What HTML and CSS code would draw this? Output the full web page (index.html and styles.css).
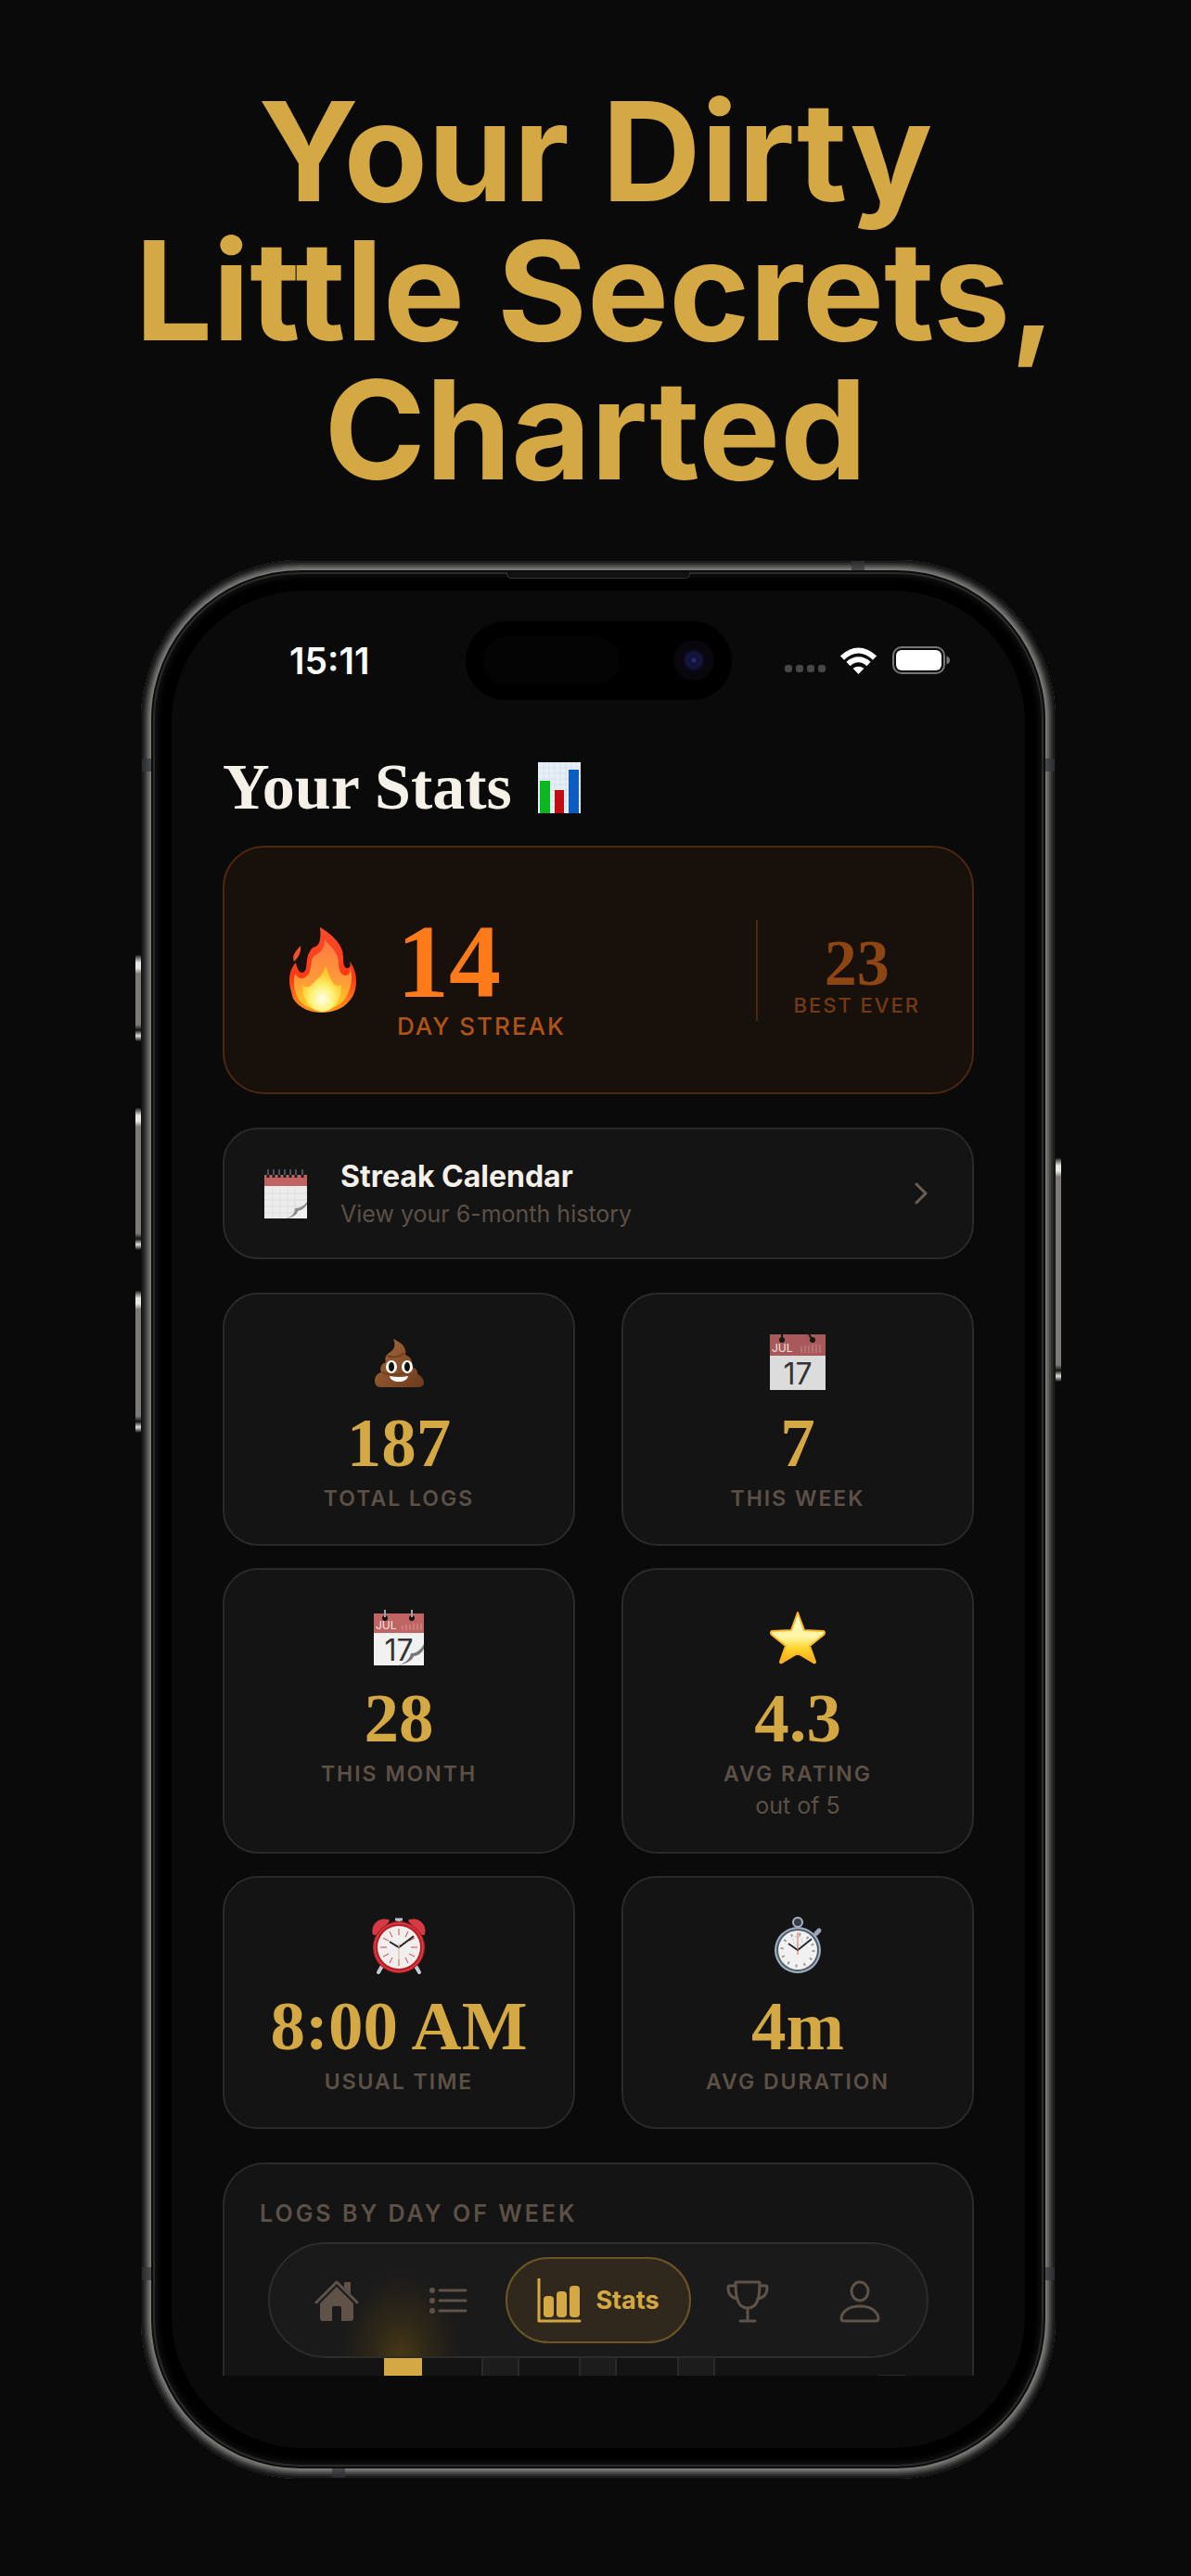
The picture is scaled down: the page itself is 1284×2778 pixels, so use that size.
FILE: index.html
```html
<!DOCTYPE html>
<html lang="en">
<head>
    <meta charset="UTF-8">
    <meta name="viewport" content="width=device-width, initial-scale=1.0">
    <title>Your Stats</title>
    <link rel="stylesheet" href="styles.css">
</head>
<body>
    <h1 class="headline">Your Dirty<br>Little Secrets,<br>Charted</h1>

    <div class="stage">
        <div class="phone">
            <span class="side-button action"></span>
            <span class="side-button volume-up"></span>
            <span class="side-button volume-down"></span>
            <span class="side-button power"></span>
            <span class="antenna antenna-left"></span>
            <span class="antenna antenna-right"></span>
            <span class="antenna antenna-left low"></span>
            <span class="antenna antenna-right low"></span>
            <span class="antenna antenna-top"></span>
            <span class="antenna antenna-bottom"></span>
            <span class="speaker"></span>

            <div class="screen">
                <header class="status-bar">
                    <span class="time">15:11</span>
                    <span class="island"><span class="sensor"></span><span class="camera"></span></span>
                    <span class="status-icons">
                        <span class="signal"><i></i><i></i><i></i><i></i></span>
                        <svg class="wifi" viewBox="0 0 39 29" fill="none" stroke="#fff" stroke-width="6">
                            <path d="M2 11.500Q10.500 3.500 19.500 3.500T37 11.500"/>
                            <path d="M8.500 18Q13.500 13.300 19.500 13.300T30.500 18"/>
                            <path d="M13.500 22.800Q19.500 18.500 25.500 22.800L19.500 29Z" fill="#fff" stroke="none"/>
                        </svg>
                        <svg class="battery" viewBox="0 0 62 30">
                            <rect x="1" y="1" width="55" height="28" rx="9" fill="none" stroke="#777" stroke-width="2"/>
                            <rect x="4" y="4" width="49" height="22" rx="6" fill="#fff"/>
                            <path d="M58.500 10.500Q62 12 62 15T58.500 19.500Z" fill="#777"/>
                        </svg>
                    </span>
                </header>

                <main class="content">
                    <h2 class="page-title">
                        Your Stats
                        <svg viewBox="0 0 46 55" aria-hidden="true">
                            <rect width="46" height="55" fill="#e6eef6"/>
                            <path d="M0 6h46M0 12h46M0 18h46M0 24h46M0 30h46M0 36h46M0 42h46M0 48h46M6 0v55M12 0v55M18 0v55M24 0v55M30 0v55M36 0v55M42 0v55" stroke="#d6e2ee"/>
                            <rect x="2" y="20" width="11" height="35" fill="#09b81d"/>
                            <rect x="18" y="30" width="10" height="25" fill="#c20d12"/>
                            <rect x="33" y="8" width="11" height="47" fill="#0b5cc4"/>
                        </svg>
                    </h2>

                    <section class="streak-card">
                        <svg class="flame" viewBox="0 0 72 92" aria-hidden="true">
                            <defs>
                                <linearGradient id="fire" x1="0" y1="0" x2="0" y2="1">
                                    <stop offset="0" stop-color="#ff4a2c"/>
                                    <stop offset="0.600" stop-color="#ff3a12"/>
                                    <stop offset="1" stop-color="#ff9a1a"/>
                                </linearGradient>
                                <linearGradient id="fire-mid" x1="0" y1="0" x2="0" y2="1">
                                    <stop offset="0" stop-color="#ff7a42"/>
                                    <stop offset="0.600" stop-color="#ff9c38"/>
                                    <stop offset="1" stop-color="#ffd21c"/>
                                </linearGradient>
                                <radialGradient id="fire-core" cx="0.500" cy="0.720" r="0.550">
                                    <stop offset="0" stop-color="#fffff0"/>
                                    <stop offset="0.500" stop-color="#fff27a"/>
                                    <stop offset="1" stop-color="#ffc92a"/>
                                </radialGradient>
                            </defs>
                            <path d="M33 0C43 6 58 17 58 32C58 40 59 44 62 44C66 44 66 41 65 37C70 43 72 51 72 58C72 66 70 74 64 80C58 88 46 92 35 92C24 92 11 88 4 77C2 69 0 64 0 57C0 49 3 42 7 38C8 44 10 49 14 49C19 48 18 40 19 35C20 28 24 21 28 21C34 18 34 9 33 0Z" fill="url(#fire)"/>
                            <path d="M12 20C13 28 9 33 5 37C2 31 7 25 12 20Z" fill="#f4502e"/>
                            <path d="M38 14C45 21 53 28 53 38C53 46 55 51 60 52C66 52 65 47 66 45C69 55 66 68 60 77C54 85 45 89 35 89C22 89 12 83 8 74C5 67 4 58 6 50C9 55 13 56 17 54C24 50 22 41 25 33C28 28 38 28 38 14Z" fill="url(#fire-mid)"/>
                            <path d="M39 42C42 50 44 55 47 60C50 64 53 64 56 62C58 73 49 91 36 91C22 91 13 76 14 62C18 66 22 65 25 61C29 57 37 51 39 42Z" fill="url(#fire-core)"/>
                        </svg>
                        <div class="streak-current">
                            <strong>14</strong>
                            <span>DAY STREAK</span>
                        </div>
                        <span class="divider"></span>
                        <div class="streak-best">
                            <strong>23</strong>
                            <span>BEST EVER</span>
                        </div>
                    </section>

                    <a class="calendar-link" href="#calendar">
                        <svg class="calendar-icon" viewBox="0 0 46 53" aria-hidden="true">
                            <rect y="6" width="46" height="47" fill="#ececec"/>
                            <rect y="6" width="46" height="12" fill="#bf6463"/>
                            <path d="M0 26h46M0 33h46M0 40h46M0 47h46M9 18v35M17 18v35M25 18v35M33 18v35" stroke="#dcdcdc"/>
                            <path d="M4 1v8M10 1v8M16 1v8M22 1v8M28 1v8M34 1v8M41 1v8" stroke="#1a1b1e" stroke-width="3"/>
                            <path d="M4 0v6M10 0v6M16 0v6M22 0v6M28 0v6M34 0v6M41 0v6" stroke="#7d8794"/>
                            <path d="M24 53C32 50 33 45 33 42C39 42 43 39 46 35V53Z" fill="#8d8d8d"/>
                            <path d="M24 53C34 51 36 47 36 45C41 44 44 41 46 38V53Z" fill="#f2f2f2"/>
                        </svg>
                        <span class="calendar-text">
                            <strong>Streak Calendar</strong>
                            <span>View your 6-month history</span>
                        </span>
                        <svg class="chevron" viewBox="0 0 14 24" fill="none" stroke="#6a5d53" stroke-width="3" stroke-linecap="round" stroke-linejoin="round">
                            <path d="M2 2L12 12L2 22"/>
                        </svg>
                    </a>

                    <section class="stats-grid">
                        <article class="stat-card">
                            <svg viewBox="0 0 64 64" aria-hidden="true">
                                <defs>
                                    <linearGradient id="brown" x1="0" y1="0" x2="1" y2="1">
                                        <stop offset="0" stop-color="#a86a3c"/>
                                        <stop offset="1" stop-color="#6b3a1c"/>
                                    </linearGradient>
                                </defs>
                                <path d="M26 7C33 10 41 15 39 24C45 26 48 32 45 37C50 38 53 41 52 45C57 47 59 51 59 54C59 58 56 59 52 59H12C8 59 6 56 6 52C6 47 9 44 13 43C11 38 13 34 18 32C16 27 19 23 23 21C27 18 29 14 26 7Z" fill="url(#brown)"/>
                                <path d="M20 25C26 28 34 26 38 22M14 43C22 47 38 47 46 38" fill="none" stroke="#6f3f1f" stroke-width="2"/>
                                <ellipse cx="24" cy="37" rx="6" ry="7" fill="#fff"/>
                                <ellipse cx="41" cy="37" rx="6" ry="7" fill="#fff"/>
                                <ellipse cx="24" cy="37" rx="3" ry="5" fill="#111"/>
                                <ellipse cx="41" cy="37" rx="3" ry="5" fill="#111"/>
                                <path d="M22 47Q32 49 42 47C41 51 37 53 32 53S23 51 22 47Z" fill="#fff"/>
                            </svg>
                            <strong>187</strong>
                            <span class="label">TOTAL LOGS</span>
                        </article>

                        <article class="stat-card">
                            <svg viewBox="0 0 64 64" aria-hidden="true">
                                <rect x="2" y="2" width="60" height="60" fill="#dcdcdc"/>
                                <rect x="2" y="2" width="60" height="23" fill="#a85a5a"/>
                                <circle cx="15" cy="8" r="3" fill="#161616"/>
                                <circle cx="48" cy="8" r="3" fill="#161616"/>
                                <path d="M15 2v6M44 2l4 6" stroke="#161616" stroke-width="2"/>
                                <text class="cal-month" x="4" y="21">JUL</text>
                                <path d="M36 22v-7M40 22v-8M44 22v-8M48 22v-9M52 22v-9M56 22v-9" stroke="#c58a88"/>
                                <text class="cal-day" x="32" y="56">17</text>
                            </svg>
                            <strong>7</strong>
                            <span class="label">THIS WEEK</span>
                        </article>

                        <article class="stat-card">
                            <svg viewBox="0 0 64 64" aria-hidden="true">
                                <rect x="5" y="6" width="54" height="56" fill="#f1f1f1"/>
                                <rect x="5" y="6" width="54" height="21" fill="#c06464"/>
                                <circle cx="17" cy="11" r="3" fill="#111"/>
                                <circle cx="46" cy="11" r="3" fill="#111"/>
                                <path d="M17 2v8M46 2v8" stroke="#9aa3ac" stroke-width="2"/>
                                <text class="cal-month" x="7" y="23">JUL</text>
                                <path d="M36 24v-5M40 24v-6M44 24v-6M48 24v-7M52 24v-7M56 24v-7" stroke="#d69a98"/>
                                <text class="cal-day" x="32" y="57">17</text>
                                <path d="M32 62C42 58 44 53 45 49C51 49 56 45 59 39V62Z" fill="#777"/>
                                <path d="M32 62C44 59 47 55 48 52C53 52 57 48 59 44V62Z" fill="#f4f4f4"/>
                            </svg>
                            <strong>28</strong>
                            <span class="label">THIS MONTH</span>
                        </article>

                        <article class="stat-card">
                            <svg viewBox="0 0 64 64" aria-hidden="true">
                                <defs>
                                    <linearGradient id="gold" x1="0" y1="0" x2="0" y2="1">
                                        <stop offset="0" stop-color="#fffbd0"/>
                                        <stop offset="0.500" stop-color="#fff3a0"/>
                                        <stop offset="0.700" stop-color="#ffd52e"/>
                                        <stop offset="1" stop-color="#fba80f"/>
                                    </linearGradient>
                                </defs>
                                <path d="M32 5L39 24L60 25Q62 27 60 29L45 41L51 58Q51 60 49 59L32 49L15 59Q13 60 13 58L19 41L4 29Q2 27 4 25L25 24Z" fill="url(#gold)" stroke="#f8b62a" stroke-width="2" stroke-linejoin="round"/>
                            </svg>
                            <strong>4.3</strong>
                            <span class="label">AVG RATING</span>
                            <span class="note">out of 5</span>
                        </article>

                        <article class="stat-card">
                            <svg viewBox="0 0 64 64" aria-hidden="true">
                                <path d="M14 54L10 61M50 54L54 61" stroke="#c4ccd4" stroke-width="4" stroke-linecap="round"/>
                                <path d="M4 20C1 10 10 1 21 4Q23 5 20 8L8 20Q5 22 4 20ZM60 20C63 10 54 1 43 4Q41 5 44 8L56 20Q59 22 60 20Z" fill="#d63a44"/>
                                <path d="M28 4h8M32 4v6" stroke="#b9c1ca" stroke-width="3"/>
                                <circle cx="32" cy="34" r="28" fill="#bb1f28"/>
                                <circle cx="32" cy="34" r="26" fill="none" stroke="#e0525a"/>
                                <circle cx="32" cy="34" r="23" fill="#f0efed"/>
                                <path d="M32 14v7M32 47v7M12 34h7M45 34h7M22 17l3 6M42 17l-3 6M15 24l6 3M49 24l-6 3M15 44l6-3M49 44l-6-3M22 51l3-6M42 51l-3-6" stroke="#d94048"/>
                                <path d="M22 28L32 34L48 22" fill="none" stroke="#222" stroke-width="2"/>
                                <path d="M32 30v23" stroke="#d8b48a"/>
                            </svg>
                            <strong>8:00 AM</strong>
                            <span class="label">USUAL TIME</span>
                        </article>

                        <article class="stat-card">
                            <svg viewBox="0 0 64 64" aria-hidden="true">
                                <circle cx="32" cy="7" r="5" fill="#3a3f45" stroke="#a9b4c0" stroke-width="2"/>
                                <path d="M52 19l3-3" stroke="#9aa6b3" stroke-width="5" stroke-linecap="round"/>
                                <circle cx="32" cy="37" r="25" fill="#9fb2c6"/>
                                <circle cx="32" cy="37" r="23" fill="#555d68"/>
                                <circle cx="32" cy="37" r="21" fill="#f1f1f1"/>
                                <circle cx="32" cy="37" r="17" fill="none" stroke="#9a9a9a" stroke-width="3" stroke-dasharray="2 7"/>
                                <circle cx="32" cy="27" r="5" fill="none" stroke="#c4c4c4" stroke-dasharray="2 2"/>
                                <path d="M22 30L32 37L47 25" fill="none" stroke="#222c38" stroke-width="2"/>
                                <path d="M32 18v24" stroke="#e0674f"/>
                            </svg>
                            <strong>4m</strong>
                            <span class="label">AVG DURATION</span>
                        </article>
                    </section>

                    <section class="chart-card">
                        <h3>LOGS BY DAY OF WEEK</h3>
                        <div class="chart">
                            <div class="bars">
                                <span class="bar" style="height: 45%"></span>
                                <span class="bar top" style="height: 78%"></span>
                                <span class="bar" style="height: 69%"></span>
                                <span class="bar" style="height: 73%"></span>
                                <span class="bar" style="height: 73%"></span>
                                <span class="bar" style="height: 45%"></span>
                                <span class="bar" style="height: 62%"></span>
                            </div>
                        </div>
                    </section>
                </main>

                <nav class="tab-bar">
                    <a href="#home" aria-label="Home">
                        <svg viewBox="0 0 48 48" fill="#5f5249">
                            <path d="M2 26L24 4L46 26" fill="none" stroke="#5f5249" stroke-width="3" stroke-linecap="round" stroke-linejoin="round"/>
                            <path d="M32 5Q32 4 33 4H38Q39 4 39 5V17L32 10Z"/>
                            <path d="M24 9L42 27V43Q42 46 39 46H29V32Q29 30 27 30H21Q19 30 19 32V46H9Q6 46 6 43V27Z"/>
                        </svg>
                    </a>
                    <a href="#logs" aria-label="Logs">
                        <svg viewBox="0 0 48 48" fill="none" stroke="#5f5249" stroke-width="3" stroke-linecap="round">
                            <path d="M14 13H42M14 24H42M14 35H42"/>
                            <path d="M6 13h0M6 24h0M6 35h0" stroke-width="6"/>
                        </svg>
                    </a>
                    <a class="active" href="#stats">
                        <svg viewBox="0 0 48 48" fill="#d4a843">
                            <path d="M2 1V46H46" fill="none" stroke="#d4a843" stroke-width="3" stroke-linecap="round" stroke-linejoin="round"/>
                            <rect x="7" y="19" width="11" height="23" rx="4"/>
                            <rect x="21" y="14" width="11" height="28" rx="4"/>
                            <rect x="35" y="8" width="11" height="34" rx="4"/>
                        </svg>
                        <span>Stats</span>
                    </a>
                    <a href="#awards" aria-label="Awards">
                        <svg viewBox="0 0 48 48" fill="none" stroke="#5f5249" stroke-width="3" stroke-linecap="round" stroke-linejoin="round">
                            <path d="M11 5Q11 4 12 4H36Q37 4 37 5C37 20 35 32 24 32S11 20 11 5Z"/>
                            <path d="M11 8H4Q3 8 3 10C3 16 6 21 13 22M37 8H44Q45 8 45 10C45 16 42 21 35 22"/>
                            <path d="M24 32V45M16 46H32"/>
                        </svg>
                    </a>
                    <a href="#profile" aria-label="Profile">
                        <svg viewBox="0 0 48 48" fill="none" stroke="#5f5249" stroke-width="3" stroke-linejoin="round">
                            <ellipse cx="24" cy="14" rx="9" ry="10"/>
                            <path d="M7 46Q4 46 4 43C5 35 13 30 24 30S43 35 44 43Q44 46 41 46Z"/>
                        </svg>
                    </a>
                </nav>
            </div>
        </div>
    </div>
</body>
</html>
```
FILE: styles.css
```css
* {
    box-sizing: border-box;
}

body {
    margin: 0;
    padding: 89px 0 104px;
    background-color: #0a0a0a;
    font-family: Inter, "Liberation Sans", sans-serif;
}

.headline {
    margin: 0 0 65px;
    color: #d4a843;
    font-size: 148px;
    font-weight: 700;
    line-height: 150px;
    text-align: center;
}

.stage {
    padding: 0 146px 0 152px;
}

/* phone frame */
.phone {
    position: relative;
    padding: 33px;
    border-radius: 172px;
    background: #000;
    box-shadow:
        inset 0 0 0 1px #101010,
        inset 0 0 0 3px #1e1e1e,
        inset 0 0 0 5px #303030,
        inset 0 0 0 7px #484847,
        inset 0 0 0 9px #636260,
        inset 0 0 0 11px #787774,
        inset 0 0 0 13px #0c0c0c,
        inset 0 0 0 15px #2a2a2a,
        inset 0 0 8px 16px #1a1a1a;
}

.side-button {
    position: absolute;
    left: -6px;
    width: 6px;
    border-radius: 2px;
    background: linear-gradient(#222 0, #e8e6e0 8px, #e8e6e0 14px, #7b7a77 20px, #7b7a77 calc(100% - 18px), #111 calc(100% - 12px), #e0dedb calc(100% - 6px), #111 100%);
}

.action {
    top: 426px;
    height: 93px;
}

.volume-up {
    top: 591px;
    height: 153px;
}

.volume-down {
    top: 788px;
    height: 153px;
}

.power {
    top: 645px;
    right: -6px;
    left: auto;
    height: 241px;
}

.antenna {
    position: absolute;
    background-color: rgba(50, 52, 58, 0.7);
}

.antenna-left,
.antenna-right {
    top: 214px;
    width: 10px;
    height: 14px;
}

.antenna-left {
    left: 1px;
}

.antenna-right {
    right: 1px;
}

.antenna.low {
    top: auto;
    bottom: 214px;
}

.antenna-top,
.antenna-bottom {
    width: 14px;
    height: 10px;
}

.antenna-top {
    top: 1px;
    right: 206px;
}

.antenna-bottom {
    bottom: 1px;
    left: 206px;
}

.speaker {
    position: absolute;
    top: 13px;
    left: 40%;
    width: 20%;
    height: 7px;
    border: 1px solid #333;
    border-top: none;
    border-radius: 0 0 5px 5px;
    background-color: #111;
}

.screen {
    position: relative;
    padding-bottom: 78px;
    border-radius: 142px;
    background-color: #0a0a0a;
}

/* status bar */
.status-bar {
    display: grid;
    grid-template-columns: 1fr 287px 1fr;
    align-items: center;
    height: 150px;
}

.time {
    padding-left: 24px;
    color: #fff;
    font-size: 39px;
    font-weight: 600;
    text-align: center;
}

.island {
    display: flex;
    align-items: center;
    justify-content: space-between;
    height: 85px;
    padding: 0 19px 0 18px;
    border-radius: 43px;
    background-color: #000;
}

.sensor {
    width: 148px;
    height: 51px;
    border-radius: 26px;
    background-color: #040404;
}

.camera {
    width: 44px;
    height: 44px;
    border-radius: 50%;
    background: radial-gradient(circle, #34348a 0, #101034 4px, #15193f 8px, #0a0a20 11px, #0a060e 13px, #09060b 22px);
}

.status-icons {
    display: flex;
    align-items: flex-end;
    justify-content: flex-end;
    padding-right: 81px;
}

.signal {
    display: flex;
    gap: 4px;
    margin: 0 16px 2px 0;
}

.signal i {
    width: 8px;
    height: 8px;
    border-radius: 3px;
    background-color: #474747;
}

.wifi {
    width: 39px;
    height: 29px;
    margin-right: 17px;
}

.battery {
    width: 62px;
    height: 30px;
}

/* page */
.content {
    padding: 24px 55px 0;
}

.page-title {
    display: flex;
    align-items: center;
    gap: 28px;
    margin: 0 0 25px;
    color: #f5f0e8;
    font-family: "Liberation Serif", serif;
    font-size: 70px;
    font-weight: 700;
    line-height: 76px;
}

.page-title svg {
    width: 46px;
    height: 55px;
}

.streak-card {
    display: flex;
    align-items: center;
    padding: 56px 56px 56px 70px;
    border: 2px solid #4c2711;
    border-radius: 45px;
    background-color: #18100b;
}

.flame {
    width: 72px;
    height: 92px;
    margin-right: 44px;
}

.streak-current,
.streak-best {
    display: flex;
    flex-direction: column;
    padding-top: 12px;
    white-space: nowrap;
}

.streak-current strong,
.streak-best strong,
.stat-card strong {
    font-family: "Liberation Serif", serif;
    font-weight: 700;
}

.streak-current strong {
    color: #ff7a18;
    font-size: 112px;
    line-height: 110px;
}

.streak-current span {
    color: #ae5415;
    font-size: 26px;
    font-weight: 500;
    letter-spacing: 2px;
    line-height: 30px;
}

.divider {
    width: 2px;
    height: 109px;
    margin: 0 38px 0 auto;
    background-color: #4c2711;
}

.streak-best {
    align-items: center;
}

.streak-best strong {
    color: #8d4513;
    font-size: 70px;
    line-height: 64px;
}

.streak-best span {
    color: #743a12;
    font-size: 22px;
    font-weight: 500;
    letter-spacing: 2px;
    line-height: 26px;
}

.calendar-link {
    display: flex;
    align-items: center;
    margin-top: 36px;
    padding: 32px 48px 32px 43px;
    border: 2px solid #2a2a2a;
    border-radius: 38px;
    background-color: #141414;
    text-decoration: none;
}

.calendar-icon {
    width: 46px;
    height: 53px;
    margin-right: 36px;
}

.calendar-text {
    display: flex;
    flex: 1;
    flex-direction: column;
    gap: 6px;
}

.calendar-text strong {
    color: #f5f0e8;
    font-size: 32px;
    font-weight: 700;
    line-height: 38px;
}

.calendar-text span {
    color: #5c5047;
    font-size: 25px;
    line-height: 30px;
}

.chevron {
    width: 14px;
    height: 24px;
}

.stats-grid {
    display: grid;
    grid-template-columns: 1fr 1fr;
    gap: 24px 50px;
    margin-top: 36px;
}

.stat-card {
    display: flex;
    flex-direction: column;
    align-items: center;
    padding: 41px 20px 35px;
    border: 2px solid #2a2a2a;
    border-radius: 38px;
    background-color: #141414;
}

.stat-card svg {
    width: 64px;
    height: 64px;
    margin-bottom: 15px;
}

.stat-card strong {
    color: #d4a843;
    font-size: 75px;
    line-height: 80px;
    white-space: nowrap;
}

.label {
    margin-top: 6px;
    color: #5c5047;
    font-size: 23px;
    font-weight: 600;
    letter-spacing: 2px;
    line-height: 28px;
}

.note {
    margin-top: 5px;
    color: #5c5047;
    font-size: 25px;
    line-height: 30px;
}

.cal-month {
    fill: #f3e4e4;
    font-size: 12px;
}

.cal-day {
    fill: #333;
    font-size: 32px;
    text-anchor: middle;
}

/* the card runs on below the fold, so it has no bottom edge */
.chart-card {
    margin-top: 36px;
    padding: 38px 38px 0;
    border: 2px solid #2a2a2a;
    border-bottom: none;
    border-radius: 45px 45px 0 0;
    background-color: #141414;
}

.chart-card h3 {
    margin: 0;
    color: #5c5047;
    font-size: 25px;
    font-weight: 600;
    letter-spacing: 3px;
    line-height: 30px;
}

.chart {
    height: 123px;
    margin-top: 37px;
    overflow: hidden;
}

.bars {
    display: grid;
    grid-template-columns: repeat(7, 1fr);
    align-items: end;
    justify-items: center;
    gap: 8px;
    height: 320px;
}

.bar {
    width: 41px;
    border: 2px solid #2a2a2a;
    border-radius: 8px 8px 0 0;
    background-color: #1c1c1c;
}

.bar.top {
    border-color: #d4a843;
    background-color: #d4a843;
}

/* tab bar */
.tab-bar {
    position: absolute;
    right: 104px;
    bottom: 97px;
    left: 104px;
    display: flex;
    align-items: center;
    gap: 1px;
    height: 125px;
    padding: 0 12px;
    border: 2px solid #2c2c2c;
    border-radius: 63px;
    background:
        radial-gradient(ellipse 64px 90px at 141px 100%, rgba(190, 140, 10, 0.28), rgba(190, 140, 10, 0.12) 45%, transparent),
        #1a1a1a;
}

.tab-bar a {
    display: flex;
    flex: 1;
    align-items: center;
    justify-content: center;
    text-decoration: none;
}

.tab-bar svg {
    width: 48px;
    height: 48px;
}

.tab-bar .active {
    flex: none;
    gap: 15px;
    height: 93px;
    padding: 0 32px;
    border: 2px solid #6b5425;
    border-radius: 47px;
    background-color: #30281d;
    color: #d4a843;
    font-size: 27px;
    font-weight: 700;
}
```
